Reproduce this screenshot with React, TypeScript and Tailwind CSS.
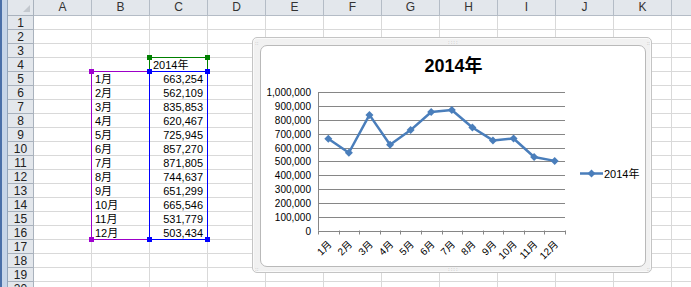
import React from "react";

const cols = ["A", "B", "C", "D", "E", "F", "G", "H", "I", "J", "K", "L"];
const months = ["1月", "2月", "3月", "4月", "5月", "6月", "7月", "8月", "9月", "10月", "11月", "12月"];
const values = [663254, 562109, 835853, 620467, 725945, 857270, 871805, 744637, 651299, 665546, 531779, 503434];

const font = { fontFamily: '"Liberation Sans", "Noto Sans CJK JP", sans-serif' };

// plot area in page coords
const X0 = 317;
const X1 = 564;
const Y0 = 229.5;
const STEP = 13.83;
const CW = (X1 - X0) / 12;
const yOf = (v: number) => Y0 - (v / 100000) * STEP;
const xOf = (i: number) => X0 + (i + 0.5) * CW;

const cellText = (row: number, col: number): { text: string; right?: boolean } | null => {
  if (row === 4 && col === 2) return { text: "2014年" };
  if (row >= 5 && row <= 16) {
    if (col === 1) return { text: months[row - 5] };
    if (col === 2) return { text: values[row - 5].toLocaleString("en-US"), right: true };
  }
  return null;
};

const Handle = ({ x, y, color }: { x: number; y: number; color: string }) => (
  <div className="absolute w-[5px] h-[5px]" style={{ left: x - 2, top: y - 2, background: color }} />
);

const Diamond = ({ x, y }: { x: number; y: number }) => (
  <path d={`M${x} ${y - 4}L${x + 4} ${y}L${x} ${y + 4}L${x - 4} ${y}Z`} fill="#4a7ebb" />
);

const Chart = () => {
  const pts = values.map((v, i) => `${xOf(i)},${yOf(v)}`).join(" ");
  return (
    <div className="absolute left-[252px] top-[37px] w-[400px] h-[236px] rounded-[5px] border border-[#c4c4c4] bg-[#f1f1f1] pl-[7px] pt-[7px] pr-[5px] pb-[5px] shadow-[inset_0_0_0_1px_#fafafa]">
      <div className="w-full h-full rounded-[7px] border border-[#b9b9b9] bg-white overflow-hidden">
        <svg width="386" height="222" viewBox="260 45 386 222" style={font}>
          <text x="452.5" y="71" textAnchor="middle" fontSize="18" fontWeight="bold" fill="#000">
            2014年
          </text>
          {Array.from({ length: 11 }, (_, i) => {
            const y = Math.round(yOf(i * 100000)) + 0.5;
            return (
              <g key={i}>
                <line x1={X0} x2={X1} y1={y} y2={y} stroke="#868686" strokeWidth="1" />
                <text x="310" y={y + 3.5} textAnchor="end" fontSize="10" fill="#000">
                  {(i * 100000).toLocaleString("en-US")}
                </text>
              </g>
            );
          })}
          <line x1={X0 + 0.5} x2={X0 + 0.5} y1={Math.round(yOf(1000000))} y2={Y0} stroke="#868686" />
          {Array.from({ length: 13 }, (_, k) => {
            const x = Math.round(X0 + k * CW) + 0.5;
            return <line key={k} x1={x} x2={x} y1={Y0} y2={Y0 + 4} stroke="#868686" />;
          })}
          {months.map((m, i) => (
            <text
              key={m}
              transform={`translate(${xOf(i) + 4} 244) rotate(-45)`}
              textAnchor="end"
              fontSize="10"
              fill="#000"
            >
              {m}
            </text>
          ))}
          <polyline points={pts} fill="none" stroke="#4a7ebb" strokeWidth="2.5" strokeLinejoin="round" />
          {values.map((v, i) => (
            <Diamond key={i} x={xOf(i)} y={yOf(v)} />
          ))}
          <line x1="579" x2="602" y1="172.5" y2="172.5" stroke="#4a7ebb" strokeWidth="2.5" />
          <Diamond x={590.5} y={172.5} />
          <text x="603" y="177" fontSize="11" fill="#000">
            2014年
          </text>
        </svg>
      </div>
      {/* frame grip dots */}
      <div className="absolute left-[195px] top-[1px] text-[6px] leading-[6px] tracking-[1px] text-[#a8a8a8]">::::</div>
      <div className="absolute left-[195px] bottom-[0px] text-[6px] leading-[6px] tracking-[1px] text-[#a8a8a8]">::::</div>
      <div className="absolute left-[2px] top-[2px] text-[6px] leading-[6px] text-[#a8a8a8]">::</div>
      <div className="absolute right-[1px] top-[2px] text-[6px] leading-[6px] text-[#a8a8a8]">::</div>
      <div className="absolute left-[2px] bottom-[0px] text-[6px] leading-[6px] text-[#a8a8a8]">::</div>
      <div className="absolute right-[1px] bottom-[0px] text-[6px] leading-[6px] text-[#a8a8a8]">::</div>
    </div>
  );
};

export default function App() {
  return (
    <div className="relative w-[691px] h-[287px] overflow-hidden bg-white flex" style={font}>
      <div className="w-[2px] shrink-0 bg-[#4a6fa8]" />
      <div className="w-[5px] shrink-0 bg-[#c6d5e9]" />
      <div className="w-[1px] shrink-0 bg-[#93a5bb]" />

      <div className="flex flex-col">
        <div className="flex h-[16px] shrink-0">
          <div className="relative w-[26px] shrink-0 border-r border-b border-[#a9b2bd] bg-[#e3e7ec]">
            <svg className="absolute right-[3px] bottom-[3px]" width="7" height="7">
              <path d="M7 0L7 7L0 7Z" fill="#c3c8ce" />
            </svg>
          </div>
          {cols.map((c) => (
            <div
              key={c}
              className="w-[58px] shrink-0 border-r border-b border-[#b4bcc6] bg-[#e3e7ec] text-center text-[12px] leading-[15px] text-[#333]"
            >
              {c}
            </div>
          ))}
        </div>

        {Array.from({ length: 20 }, (_, r) => (
          <div key={r} className="flex h-[14px] shrink-0">
            <div className="w-[26px] shrink-0 border-r border-b border-[#a9b2bd] bg-[#e3e7ec] text-center text-[12px] leading-[14px] text-[#222]">
              {r + 1}
            </div>
            {cols.map((c, ci) => {
              const t = cellText(r + 1, ci);
              return (
                <div
                  key={c}
                  className={`w-[58px] shrink-0 border-r border-b border-[#d9d9d9] text-[11px] leading-[14px] text-black whitespace-nowrap ${
                    t?.right ? "text-right pr-[4px]" : "pl-[3px]"
                  }`}
                >
                  {t?.text}
                </div>
              );
            })}
          </div>
        ))}
      </div>

      {/* selection ranges */}
      <div className="absolute left-[91px] top-[71px] w-[59px] h-[169px] border border-[#9c00c8]" />
      <div className="absolute left-[149px] top-[57px] w-[59px] h-[15px] border border-[#008000]" />
      <div className="absolute left-[149px] top-[71px] w-[59px] h-[169px] border border-[#0000ff]" />
      <Handle x={91} y={71} color="#a000d0" />
      <Handle x={149} y={71} color="#a000d0" />
      <Handle x={91} y={239} color="#a000d0" />
      <Handle x={149} y={239} color="#a000d0" />
      <Handle x={149} y={57} color="#008000" />
      <Handle x={207} y={57} color="#008000" />
      <Handle x={149} y={71} color="#0000ff" />
      <Handle x={207} y={71} color="#0000ff" />
      <Handle x={149} y={239} color="#0000ff" />
      <Handle x={207} y={239} color="#0000ff" />

      <Chart />
    </div>
  );
}
